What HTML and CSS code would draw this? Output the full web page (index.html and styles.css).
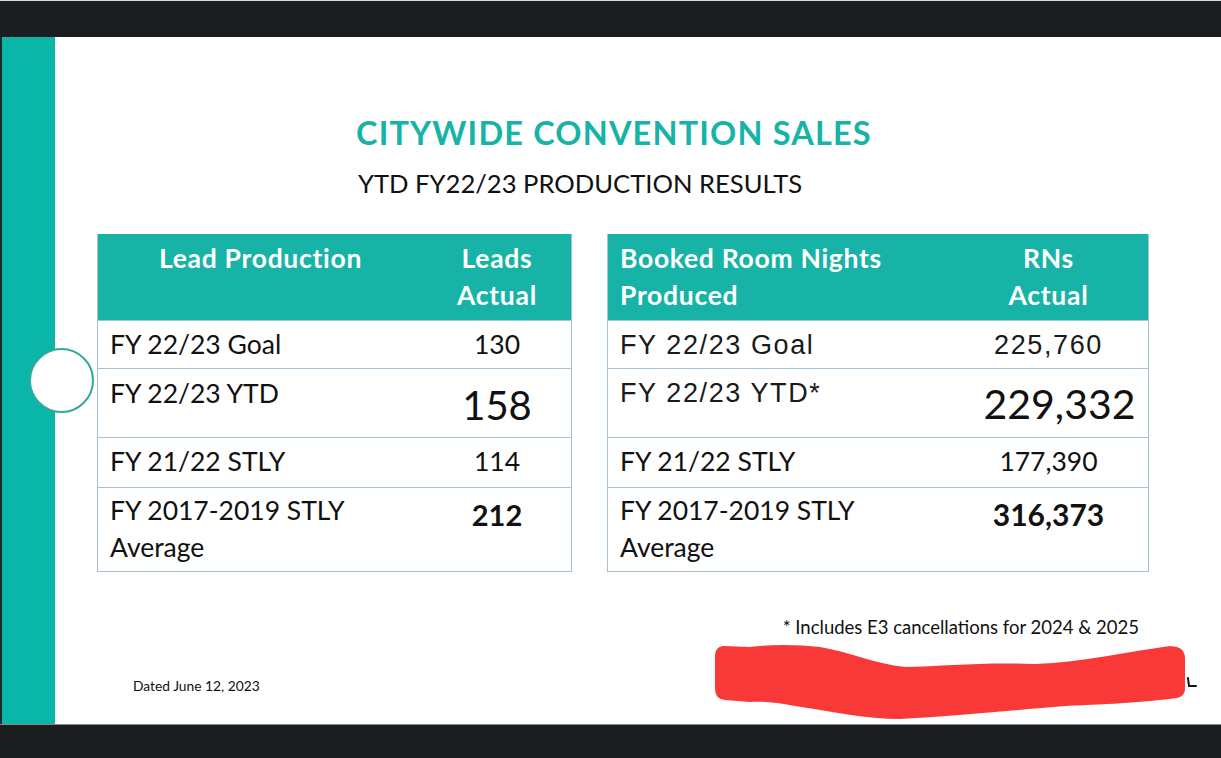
FILE: index.html
```html
<!DOCTYPE html>
<html>
<head>
<meta charset="utf-8">
<link rel="stylesheet" href="styles.css">
</head>
<body>
<div class="topbar"></div>
<div class="slide">
  <div class="accent"></div>
  <div class="content">
    <h1 class="title">CITYWIDE CONVENTION SALES</h1>
    <h2 class="subtitle">YTD FY22/23 PRODUCTION RESULTS</h2>
    <div class="tables">
      <div class="tbl tbl-left">
        <div class="row head">
          <div class="cell c-label center">Lead Production</div>
          <div class="cell c-val">Leads<br>Actual</div>
        </div>
        <div class="row r1">
          <div class="cell c-label">FY 22/23 Goal</div>
          <div class="cell c-val">130</div>
        </div>
        <div class="row r2">
          <div class="cell c-label">FY 22/23 YTD</div>
          <div class="cell c-val big">158</div>
        </div>
        <div class="row r3">
          <div class="cell c-label">FY 21/22 STLY</div>
          <div class="cell c-val">114</div>
        </div>
        <div class="row r4">
          <div class="cell c-label">FY 2017-2019 STLY<br>Average</div>
          <div class="cell c-val bold">212</div>
        </div>
      </div>
      <div class="tbl tbl-right">
        <div class="row head">
          <div class="cell c-label">Booked Room Nights<br>Produced</div>
          <div class="cell c-val">RNs<br>Actual</div>
        </div>
        <div class="row r1">
          <div class="cell c-label alt">FY 22/23 Goal</div>
          <div class="cell c-val alt">225,760</div>
        </div>
        <div class="row r2">
          <div class="cell c-label alt">FY 22/23 YTD*</div>
          <div class="cell c-val bigger">229,332</div>
        </div>
        <div class="row r3">
          <div class="cell c-label">FY 21/22 STLY</div>
          <div class="cell c-val">177,390</div>
        </div>
        <div class="row r4">
          <div class="cell c-label">FY 2017-2019 STLY<br>Average</div>
          <div class="cell c-val bold bold-wide">316,373</div>
        </div>
      </div>
    </div>
    <p class="footnote">* Includes E3 cancellations for 2024 &amp; 2025</p>
    <p class="dated">Dated June 12, 2023</p>
    <svg class="redact" width="485" height="80" viewBox="0 0 485 80">
      <path fill="#f93838" d="M 8 2 L 35 3 C 60 0, 85 1, 105 3 C 135 8, 160 20, 190 23 C 230 22, 270 18, 320 20 C 370 18, 410 8, 455 2 L 462 3 Q 470 5 470 15 L 470 45 Q 470 52 462 54 C 430 58, 400 60, 350 62 C 300 66, 240 72, 185 75 C 150 75, 120 68, 80 62 C 60 58, 45 57, 35 58 L 10 56 Q 0 55 0 45 L 0 12 Q 0 3 8 2 Z"/>
      <path fill="none" stroke="#111" stroke-width="2" stroke-linecap="round" d="M 473 34 L 474 42 L 481 42"/>
    </svg>
  </div>
  <div class="dot"></div>
</div>
<div class="bottombar"></div>
</body>
</html>
```
FILE: styles.css
```css
html, body {
  margin: 0;
  padding: 0;
}
body {
  background: #1b1e21;
  font-family: Lato, "Open Sans", sans-serif;
  color: #111;
  width: 1221px;
  height: 758px;
  overflow: hidden;
}
.topbar {
  height: 37px;
  border-top: 1px solid #d8d8d8;
  box-sizing: border-box;
}
.slide {
  height: 687px;
  background: #fff;
  display: flex;
  position: relative;
  border-left: 2px solid #1b2a2a;
  box-sizing: border-box;
}
.accent {
  width: 53px;
  background: #0ab6a8;
  flex: none;
}
.content {
  flex: 1;
  position: relative;
}
.title {
  margin: 76px 0 0 301px;
  font-size: 32.5px;
  line-height: 40px;
  font-weight: 700;
  color: #17b3a7;
  letter-spacing: 1.15px;
}
.subtitle {
  margin: 15px 0 0 303px;
  font-size: 25.6px;
  line-height: 30px;
  font-weight: 400;
  color: #111;
}
.tables {
  display: flex;
  gap: 35px;
  margin: 36px 0 0 42px;
}
.tbl {
  border: 1px solid #a6c2d6;
  border-top: none;
  box-sizing: border-box;
}
.tbl-left { width: 475px; }
.tbl-right { width: 542px; }
.row {
  display: grid;
  border-top: 1px solid #a6c2d6;
  box-sizing: border-box;
}
.tbl-left .row { grid-template-columns: 325px 1fr; }
.tbl-right .row { grid-template-columns: 341px 1fr; }
.cell {
  font-size: 26.5px;
  line-height: 37px;
}
.c-label { padding-left: 12px; }
.c-val { text-align: center; }
.center { text-align: center; padding-left: 0; }
.head {
  background: #17b3a7;
  border-top: none;
  height: 86px;
  color: #fff;
}
.head .cell {
  font-weight: 700;
  letter-spacing: 0.7px;
  padding-top: 6px;
}
.r1 { height: 48px; }
.r1 .cell { padding-top: 5px; }
.r2 { height: 69px; }
.r2 .cell { padding-top: 6px; }
.r3 { height: 50px; }
.r3 .cell { padding-top: 5px; }
.r4 { height: 84px; }
.r4 .cell { padding-top: 4px; }
.big {
  font-size: 40px;
  line-height: 44px;
  padding-top: 14px !important;
}
.bigger {
  font-size: 41px;
  line-height: 44px;
  padding-top: 13px !important;
  padding-left: 22px;
}
.bold {
  font-weight: 700;
  font-size: 29px;
  padding-top: 8px !important;
}
.bold-wide {
  font-size: 30px;
}
.alt {
  font-family: "Liberation Sans", Arial, sans-serif;
  font-size: 27px;
  font-weight: 400;
  letter-spacing: 1.6px;
  color: #1a1a1a;
  padding-top: 6px !important;
}
.footnote {
  margin: 44px 0 0 0;
  width: 1084px;
  text-align: right;
  font-size: 18.5px;
  line-height: 22px;
}
.dated {
  margin: 40px 0 0 78px;
  font-size: 13.8px;
  line-height: 16px;
}
.redact {
  position: absolute;
  left: 660px;
  top: 607px;
}
.dot {
  position: absolute;
  left: 27px;
  top: 311px;
  width: 61px;
  height: 61px;
  border-radius: 50%;
  background: #fff;
  border: 2px solid #33a89e;
}
.bottombar {
  height: 34px;
  border-top: 1px solid #8a8a8a;
  box-sizing: border-box;
}
```
